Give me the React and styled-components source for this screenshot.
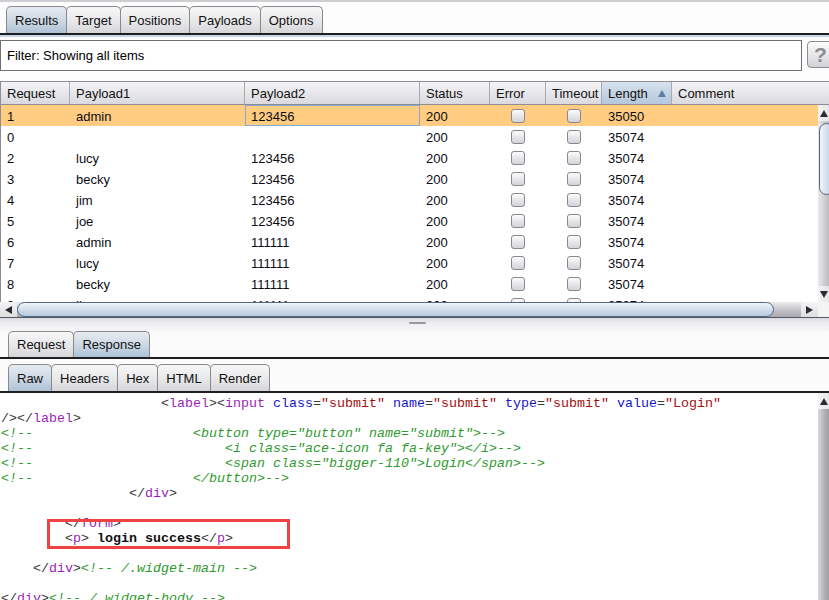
import React from "react";
import styled, { createGlobalStyle, css } from "styled-components";

const GlobalStyle = createGlobalStyle`
  html, body {
    margin: 0;
    padding: 0;
    overflow: hidden;
    background: #fafafa;
  }
  body {
    font-family: "Liberation Sans", Arial, sans-serif;
    font-size: 13px;
    color: #000;
  }
`;

const topTabs = ["Results", "Target", "Positions", "Payloads", "Options"];
const columns = ["Request", "Payload1", "Payload2", "Status", "Error", "Timeout", "Length", "Comment"];
const rows = [
  ["1", "admin", "123456", "200", "35050"],
  ["0", "", "", "200", "35074"],
  ["2", "lucy", "123456", "200", "35074"],
  ["3", "becky", "123456", "200", "35074"],
  ["4", "jim", "123456", "200", "35074"],
  ["5", "joe", "123456", "200", "35074"],
  ["6", "admin", "111111", "200", "35074"],
  ["7", "lucy", "111111", "200", "35074"],
  ["8", "becky", "111111", "200", "35074"],
  ["9", "jim", "111111", "200", "35074"],
];

const sp = (n) => " ".repeat(n);

// each line is a list of [kind, text]
const codeLines = [
  [["t", sp(20)], ["b", "<"], ["g", "label"], ["b", "><"], ["g", "input"], ["t", " "], ["a", "class"], ["b", "="], ["v", '"submit"'], ["t", " "], ["a", "name"], ["b", "="], ["v", '"submit"'], ["t", " "], ["a", "type"], ["b", "="], ["v", '"submit"'], ["t", " "], ["a", "value"], ["b", "="], ["v", '"Login"']],
  [["b", "/></"], ["g", "label"], ["b", ">"]],
  [["c", "<!--" + sp(20) + '<button type="button" name="submit">-->']],
  [["c", "<!--" + sp(24) + '<i class="ace-icon fa fa-key"></i>-->']],
  [["c", "<!--" + sp(24) + '<span class="bigger-110">Login</span>-->']],
  [["c", "<!--" + sp(20) + "</button>-->"]],
  [["t", sp(16)], ["b", "</"], ["g", "div"], ["b", ">"]],
  [],
  [["t", sp(8)], ["b", "</"], ["g", "form"], ["b", ">"]],
  [["t", sp(8)], ["b", "<"], ["g", "p"], ["b", ">"], ["k", " login success"], ["b", "</"], ["g", "p"], ["b", ">"]],
  [],
  [["t", sp(4)], ["b", "</"], ["g", "div"], ["b", ">"], ["c", "<!-- /.widget-main -->"]],
  [],
  [["b", "</"], ["g", "div"], ["b", ">"], ["c", "<!-- /.widget-body -->"]],
];

const App = () => {
  return (
    <>
      <GlobalStyle />
      <Page>
        <TopEdge />
        <TabBar $left={6} $top={4} $stripe>
          {topTabs.map((t, i) => (
            <Tab key={t} $active={i === 0} $tall>{t}</Tab>
          ))}
        </TabBar>

        <FilterRow>
          <FilterBox>Filter: Showing all items</FilterBox>
          <HelpButton>?</HelpButton>
        </FilterRow>

        <TableBox>
          <HeaderRow>
            {columns.map((c) => (
              <HeaderCell key={c} $sorted={c === "Length"}>
                {c}
                {c === "Length" && <SortArrow />}
              </HeaderCell>
            ))}
          </HeaderRow>
          <BodyArea>
            <Rows>
              {rows.map((r, i) => (
                <Row key={i} $selected={i === 0}>
                  <Cell>{r[0]}</Cell>
                  <Cell>{r[1]}</Cell>
                  <Cell $focused={i === 0}>{r[2]}</Cell>
                  <Cell>{r[3]}</Cell>
                  <Cell $center>
                    <Check />
                  </Cell>
                  <Cell $center>
                    <Check />
                  </Cell>
                  <Cell>{r[4]}</Cell>
                  <Cell />
                </Row>
              ))}
            </Rows>
            <VScroll>
              <ArrowButton>
                <Arrow $dir="up" />
              </ArrowButton>
              <VTrack>
                <VThumb />
              </VTrack>
              <ArrowButton>
                <Arrow $dir="down" />
              </ArrowButton>
            </VScroll>
          </BodyArea>
          <HScrollRow>
            <HScroll>
              <HArrow>
                <Arrow $dir="left" />
              </HArrow>
              <HTrack>
                <HThumb />
              </HTrack>
              <HArrow>
                <Arrow $dir="right" />
              </HArrow>
            </HScroll>
            <Corner />
          </HScrollRow>
        </TableBox>

        <Splitter>
          <Grip />
        </Splitter>

        <BottomPanel>
          <TabBar $left={8} $top={0}>
            <Tab>Request</Tab>
            <Tab $active>Response</Tab>
          </TabBar>
          <TabBar $left={8} $top={5}>
            <Tab $active $tall>Raw</Tab>
            <Tab $tall>Headers</Tab>
            <Tab $tall>Hex</Tab>
            <Tab $tall>HTML</Tab>
            <Tab $tall>Render</Tab>
          </TabBar>
          <CodeArea>
            <CodeText>
              {codeLines.map((line, i) => (
                <CodeLine key={i}>
                  {line.map(([k, txt], j) => (
                    <Tok key={j} $kind={k}>{txt}</Tok>
                  ))}
                </CodeLine>
              ))}
              <Highlight />
            </CodeText>
            <CodeScroll>
              <ArrowButton>
                <Arrow $dir="up" />
              </ArrowButton>
              <CodeTrack />
            </CodeScroll>
          </CodeArea>
        </BottomPanel>
      </Page>
    </>
  );
};

export default App;

const Page = styled.div`
  width: 834px;
  height: 600px;
  display: flex;
  flex-direction: column;
  background: #fdfdfd;
  overflow: hidden;
`;

const TopEdge = styled.div`
  height: 2px;
  background: #cfcfd3;
`;

const TabBar = styled.div`
  display: flex;
  align-items: flex-end;
  padding: ${(p) => p.$top}px 0 0 ${(p) => p.$left}px;
  border-bottom: 2px solid #1f1f22;
  ${(p) =>
    p.$stripe &&
    css`
      box-shadow: 0 2px 0 #c6d5e5;
      margin-bottom: 2px;
    `}
`;

const Tab = styled.div`
  height: ${(p) => (p.$tall ? 27 : 26)}px;
  display: flex;
  align-items: center;
  padding: 0 8px;
  margin-right: -1px;
  box-sizing: border-box;
  border: 1px solid #8a8a8e;
  border-bottom: none;
  border-radius: 5px 5px 0 0;
  font-size: 13px;
  color: #111;
  background: ${(p) =>
    p.$active
      ? "linear-gradient(#e6ebf1, #cbd7e3 55%, #adc2d7)"
      : "linear-gradient(#f7f7f8, #e6e6e8 60%, #d6d6d9)"};
`;

const FilterRow = styled.div`
  display: flex;
  align-items: flex-start;
  gap: 5px;
  margin-top: 3px;
`;

const FilterBox = styled.div`
  width: 802px;
  height: 31px;
  box-sizing: border-box;
  border: 1px solid #707074;
  background: #fff;
  display: flex;
  align-items: center;
  padding-left: 6px;
  font-size: 13px;
`;

const HelpButton = styled.div`
  width: 27px;
  height: 27px;
  margin-top: 1px;
  box-sizing: border-box;
  border: 1px solid #8c8c90;
  border-radius: 4px;
  background: linear-gradient(#fbfbfb, #e4e4e6 60%, #d2d2d6);
  color: #8d8d90;
  font-size: 21px;
  font-weight: bold;
  display: flex;
  align-items: center;
  justify-content: center;
`;

const cols = "69px 175px 175px 70px 56px 56px 70px 1fr";

const TableBox = styled.div`
  margin-top: 10px;
  border-top: 1px solid #8e8e92;
  display: flex;
  flex-direction: column;
`;

const HeaderRow = styled.div`
  display: grid;
  grid-template-columns: ${cols};
  height: 22px;
  border-left: 1px solid #8e8e92;
  border-bottom: 1px solid #8e8e92;
  background: linear-gradient(#f5f5f7, #e6e6ea 55%, #d9dadf);
`;

const HeaderCell = styled.div`
  display: flex;
  align-items: center;
  justify-content: space-between;
  padding: 0 5px 0 6px;
  border-right: 1px solid #a9a9b1;
  font-size: 13px;
  color: #111;
  white-space: nowrap;
  ${(p) =>
    p.$sorted &&
    css`
      background: linear-gradient(#d7e2ee, #c3d3e4 55%, #b5c8dc);
    `}
  &:last-child {
    border-right: none;
  }
`;

const SortArrow = styled.span`
  width: 0;
  height: 0;
  border-left: 4px solid transparent;
  border-right: 4px solid transparent;
  border-bottom: 7px solid #5f7ea6;
`;

const BodyArea = styled.div`
  display: flex;
  height: 197px;
`;

const Rows = styled.div`
  width: 817px;
  border-left: 1px solid #8e8e92;
  background: #fff;
  overflow: hidden;
`;

const Row = styled.div`
  display: grid;
  grid-template-columns: ${cols};
  height: 21px;
  background: ${(p) => (p.$selected ? "#ffcc82" : "#fff")};
`;

const Cell = styled.div`
  display: flex;
  align-items: center;
  justify-content: ${(p) => (p.$center ? "center" : "flex-start")};
  padding: 1px 0 0 ${(p) => (p.$center ? 0 : 6)}px;
  font-size: 13px;
  color: #0b0b14;
  white-space: nowrap;
  ${(p) =>
    p.$focused &&
    css`
      box-shadow: inset 0 0 0 1px #86aad3;
    `}
`;

const Check = styled.span`
  width: 14px;
  height: 14px;
  box-sizing: border-box;
  border: 1px solid #88888e;
  border-radius: 3px;
  background: linear-gradient(#fdfdfd, #e7e7ea 50%, #d3d4d9);
`;

const VScroll = styled.div`
  width: 16px;
  display: flex;
  flex-direction: column;
  background: linear-gradient(90deg, #e9e9eb, #c9c9cd 50%, #a9a9ae);
`;

const ArrowButton = styled.div`
  height: 16px;
  flex-shrink: 0;
  display: flex;
  align-items: center;
  justify-content: center;
  padding-right: 4px;
  background: linear-gradient(90deg, #f4f4f5, #e0e0e3);
`;

const Arrow = styled.span`
  width: 0;
  height: 0;
  ${(p) =>
    p.$dir === "up" &&
    css`
      border-left: 4px solid transparent;
      border-right: 4px solid transparent;
      border-bottom: 7px solid #2b2b30;
    `}
  ${(p) =>
    p.$dir === "down" &&
    css`
      border-left: 4px solid transparent;
      border-right: 4px solid transparent;
      border-top: 7px solid #2b2b30;
    `}
  ${(p) =>
    p.$dir === "left" &&
    css`
      border-top: 4px solid transparent;
      border-bottom: 4px solid transparent;
      border-right: 7px solid #2b2b30;
    `}
  ${(p) =>
    p.$dir === "right" &&
    css`
      border-top: 4px solid transparent;
      border-bottom: 4px solid transparent;
      border-left: 7px solid #2b2b30;
    `}
`;

const VTrack = styled.div`
  flex: 1;
  padding-top: 2px;
`;

const VThumb = styled.div`
  height: 72px;
  margin-left: 1px;
  box-sizing: border-box;
  border: 1px solid #55677d;
  border-radius: 8px;
  background: linear-gradient(90deg, #f2f6fa, #d4e1ee 50%, #b7cbe0);
`;

const HScrollRow = styled.div`
  display: flex;
  height: 16px;
`;

const HScroll = styled.div`
  width: 818px;
  display: flex;
  align-items: stretch;
  background: linear-gradient(#ececee, #c6c6ca 50%, #a8a8ad);
  border-bottom: 1px solid #4e5867;
  box-sizing: border-box;
`;

const HArrow = styled.div`
  width: 17px;
  display: flex;
  align-items: center;
  justify-content: center;
  background: linear-gradient(#f4f4f5, #dedee1);
`;

const HTrack = styled.div`
  flex: 1;
  padding-right: 27px;
  display: flex;
`;

const HThumb = styled.div`
  flex: 1;
  box-sizing: border-box;
  border: 1px solid #55677d;
  border-radius: 8px;
  background: linear-gradient(#f0f5fa, #d2dfec 50%, #b5c9de);
`;

const Corner = styled.div`
  flex: 1;
  background: #f4f4f5;
  border-bottom: 1px solid #4e5867;
`;

const Splitter = styled.div`
  height: 13px;
  display: flex;
  justify-content: center;
  padding-top: 4px;
  box-sizing: border-box;
  background: linear-gradient(#dcdce0, #eeeef0 40%, #f6f6f7);
`;

const Grip = styled.div`
  width: 17px;
  height: 2px;
  border-radius: 1px;
  background: #97979c;
`;

const BottomPanel = styled.div`
  flex: 1;
  display: flex;
  flex-direction: column;
  background: #fbfbfb;
  min-height: 0;
`;

const CodeArea = styled.div`
  flex: 1;
  display: flex;
  min-height: 0;
`;

const CodeText = styled.div`
  position: relative;
  width: 818px;
  background: #fff;
  overflow: hidden;
  padding: 3px 0 0 1px;
  box-sizing: border-box;
  font-family: "Liberation Mono", "Courier New", monospace;
  font-size: 13.34px;
  line-height: 15px;
`;

const CodeLine = styled.div`
  height: 15px;
  white-space: pre;
`;

const tokenColors = {
  t: "#000",
  b: "#3a3a3a",
  g: "#9a1fb8",
  a: "#1616c8",
  v: "#a40f0f",
  c: "#2f9a2f",
  k: "#111",
};

const Tok = styled.span`
  color: ${(p) => tokenColors[p.$kind]};
  font-style: ${(p) => (p.$kind === "c" ? "italic" : "normal")};
  font-weight: ${(p) => (p.$kind === "k" ? "bold" : "normal")};
`;

const Highlight = styled.div`
  position: absolute;
  left: 47px;
  top: 126px;
  width: 243px;
  height: 30px;
  box-sizing: border-box;
  border: 3px solid #f04242;
`;

const CodeScroll = styled.div`
  width: 16px;
  display: flex;
  flex-direction: column;
`;

const CodeTrack = styled.div`
  flex: 1;
  background: linear-gradient(90deg, #dadadd, #a9a9ae 50%, #8e8e94);
`;
